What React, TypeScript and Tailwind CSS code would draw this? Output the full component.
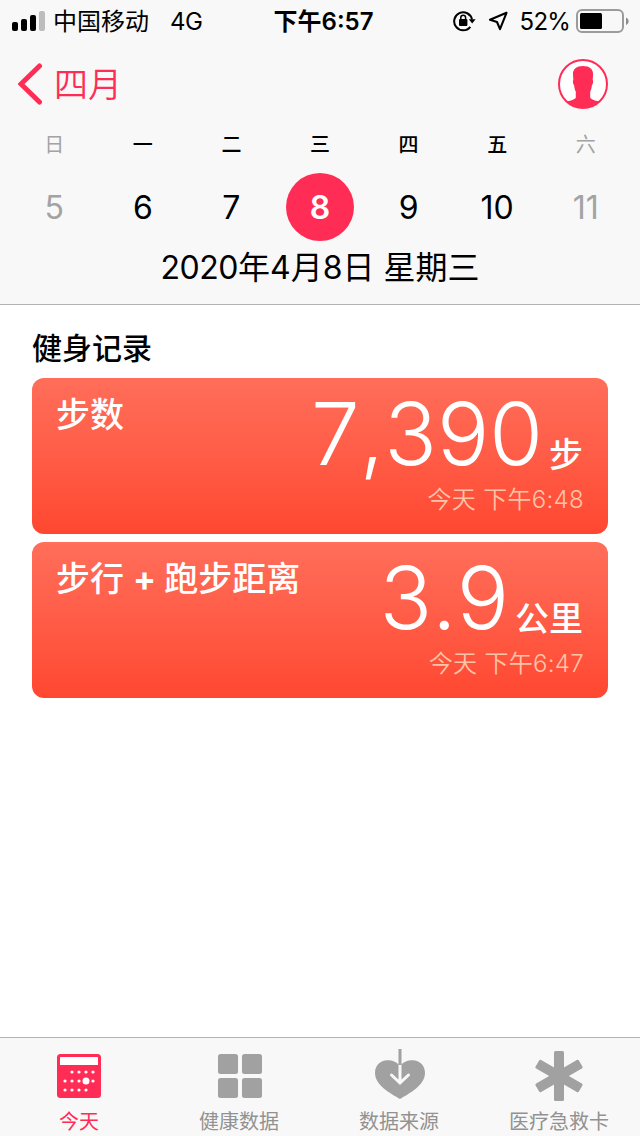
import type { ReactNode } from 'react';

const days = [
  { name: '日', date: 5, weekend: true },
  { name: '一', date: 6 },
  { name: '二', date: 7 },
  { name: '三', date: 8, selected: true },
  { name: '四', date: 9 },
  { name: '五', date: 10 },
  { name: '六', date: 11, weekend: true },
];

function StatusBar() {
  return (
    <div className="h-10 grid grid-cols-[1fr_auto_1fr] items-center text-2xl leading-10 text-black">
      <div className="flex items-center pl-3">
        <svg width="33" height="20" viewBox="0 0 33 20">
          <rect x="0" y="11" width="6" height="9" rx="2" />
          <rect x="9" y="8" width="6" height="12" rx="2" />
          <rect x="18" y="4" width="6" height="16" rx="2" />
          <rect x="27" y="0" width="6" height="20" rx="2" fill="#bdbdbd" />
        </svg>
        <span className="ml-2 pt-0.5">中国移动</span>
        <span className="ml-[21px] pt-0.5 tracking-[-0.5px]">4G</span>
      </div>
      <div className="font-semibold pl-[7px] pt-px">下午6:57</div>
      <div className="flex items-center justify-end pr-2.5">
        {/* Rotation lock */}
        <svg width="23" height="22" viewBox="0 0 23 22">
          <path d="M17.3 16.8A9 9 0 1 1 19 9.500" fill="none" stroke="#000" strokeWidth="2" />
          <path d="M15.8 9.2h6.8L19.2 13.5z" />
          <rect x="6" y="9" width="8.4" height="7" rx="1" />
          <path d="M7.8 9.5V7.6a2.4 2.4 0 0 1 4.8 0v1.9" fill="none" stroke="#000" strokeWidth="1.5" />
        </svg>
        {/* Location arrow */}
        <svg className="ml-3" width="20" height="20" viewBox="0 0 20 20">
          <path d="M18.500 1.800 2 8.800 9 11 12 18.200z" fill="none" stroke="#000" strokeWidth="2.1" strokeLinejoin="round" />
        </svg>
        <span className="ml-3 pt-0.5 tracking-[-0.8px]">52%</span>
        <svg className="ml-1.5" width="54" height="24" viewBox="0 0 54 24">
          <rect x="1" y="1" width="46" height="22" rx="5" fill="none" stroke="#9b9b9b" strokeWidth="2" />
          <rect x="4" y="4" width="22" height="16" rx="1.5" />
          <path d="M50 8.5c3.5 1.5 3.5 6 0 7.5z" fill="#8e8e8e" />
        </svg>
      </div>
    </div>
  );
}

function NavBar() {
  return (
    <div className="h-[88px] flex items-center justify-between pl-[18px] pr-8 text-[#ff2d55]">
      <div className="flex items-center">
        <svg width="25" height="42" viewBox="0 0 25 42">
          <path d="M21.5 3 3 21l18.5 18" fill="none" stroke="currentColor" strokeWidth="5" strokeLinecap="round" />
        </svg>
        <span className="ml-[11px] pt-0.5 text-[34px] leading-none font-[350]">四月</span>
      </div>
      <svg width="50" height="50" viewBox="0 0 50 50" fill="currentColor">
        <circle cx="25" cy="25" r="24" fill="#fff" stroke="currentColor" strokeWidth="2" />
        <path d="M25 7c-7 0-10.5 3.5-10 9l.3 5c-.8.6-.4 4.300.8 5.300.4 3.500.9 5 1.700 6.500v5.700c-.8 2-4 2.800-8.800 4A24 24 0 0 0 41 42.500c-4.800-1.200-8-2-8.800-4v-5.700c.8-1.500 1.300-3 1.700-6.500 1.200-1 1.600-4.700.8-5.300l.3-5c.5-5.500-3-9-10-9z" />
      </svg>
    </div>
  );
}

function Week() {
  return (
    <div className="grid grid-cols-7 px-[10px]">
      {days.map((day) => (
        <div key={day.date} className={`flex flex-col items-center ${day.weekend ? 'text-[#a3a3a3]' : 'text-black'}`}>
          <span className={`h-8 text-xl leading-[34px] ${day.weekend ? '' : 'font-medium'}`}>{day.name}</span>
          <span
            className={`mt-[13px] size-[68px] rounded-full text-center text-[32px] leading-[69px] ${
              day.selected ? 'bg-[#ff2d55] text-white font-semibold' : ''
            }`}
          >
            {day.date}
          </span>
        </div>
      ))}
    </div>
  );
}

type CardProps = { title: ReactNode; value: string; unit: string; time: string };

function Card({ title, value, unit, time }: CardProps) {
  return (
    <div className="h-[156px] flex justify-between rounded-xl bg-linear-to-b from-[#ff6e5a] to-[#ff4730] px-6 text-white">
      <div className="pt-4 text-[34px] leading-[41px] font-medium whitespace-nowrap">{title}</div>
      <div className="flex flex-col items-end">
        <div className="h-[108px] flex items-baseline leading-[112px] whitespace-nowrap">
          <span className="text-[87px] font-light [font-kerning:none]">{value}</span>
          <span className="ml-1.5 mr-px translate-y-0.5 text-[34px] font-medium">{unit}</span>
        </div>
        <div className="text-2xl leading-7 font-[350] tracking-[0.3px] text-[#ffc4a8]">{time}</div>
      </div>
    </div>
  );
}

function CalendarIcon() {
  const dots = [
    [15, 18], [22, 18], [29, 18], [36, 18],
    [8, 27], [15, 27], [22, 27], [36, 27],
    [8, 36], [15, 36], [22, 36], [29, 36],
  ];
  return (
    <svg width="50" height="52" viewBox="-3 -4 50 52">
      <rect width="44" height="44" rx="3.5" fill="currentColor" />
      <rect x="3" y="3" width="38" height="8" rx="0.5" fill="#fff" />
      {dots.map(([x, y]) => (
        <circle key={`${x}-${y}`} cx={x} cy={y} r="1.6" fill="#fff" />
      ))}
      <circle cx="29" cy="27" r="3.5" fill="#fff" />
    </svg>
  );
}

function GridIcon() {
  return (
    <svg width="50" height="52" viewBox="-4 -4 50 52" fill="#a1a1a1">
      <rect width="20" height="20" rx="2.5" />
      <rect x="24" width="20" height="20" rx="2.5" />
      <rect y="24" width="20" height="20" rx="2.5" />
      <rect x="24" y="24" width="20" height="20" rx="2.5" />
    </svg>
  );
}

function HeartIcon() {
  return (
    <svg className="overflow-visible" width="50" height="52" viewBox="-1 0 50 52">
      <path d="M25 49C16 43.5 0 35.5 0 23 0 14 7 10.3 12 10.3c6 0 10 2 13 5.5 3-3.5 7-5.5 13-5.5 5 0 12 3.7 12 12.7C50 35.5 34 43.5 25 49z" fill="#a1a1a1" />
      <path d="M25 15v18M16.5 25 25 33l8.5-8" fill="none" stroke="#f8f8f8" strokeWidth="3" strokeLinecap="round" />
      <path d="M25-1v16" stroke="#a1a1a1" strokeWidth="3" />
    </svg>
  );
}

function AsteriskIcon() {
  return (
    <svg width="50" height="52" viewBox="0 0 50 52" fill="#a1a1a1">
      <rect x="20" y="1" width="10" height="50" rx="1.5" />
      <rect x="20" y="1" width="10" height="50" rx="1.5" transform="rotate(60 25 26)" />
      <rect x="20" y="1" width="10" height="50" rx="1.5" transform="rotate(-60 25 26)" />
    </svg>
  );
}

function Tab({ icon, label, active }: { icon: ReactNode; label: string; active?: boolean }) {
  return (
    <div className={`w-40 flex flex-col items-center pt-3 pr-0.5 ${active ? 'text-[#ff2d55]' : 'text-[#929292]'}`}>
      {icon}
      <span className="mt-[7px] text-xl leading-[27px]">{label}</span>
    </div>
  );
}

export default function App() {
  return (
    <div className="w-[640px] h-[1136px] flex flex-col overflow-hidden bg-white font-[Inter,'Noto_Sans_CJK_SC',sans-serif]">
      <header className="h-[305px] shrink-0 border-b border-[#b2b2b2] bg-[#f8f8f8]">
        <StatusBar />
        <NavBar />
        <Week />
        <div className="mt-[5px] text-center text-[32px] leading-[44px] text-black">
          <span className="tracking-[-0.5px]">2020</span>年4月8日 星期三
        </div>
      </header>

      <main className="flex-1 px-8">
        <h1 className="pt-[23px] pb-2.5 text-[30px] leading-10 font-medium text-black">健身记录</h1>
        <div className="flex flex-col gap-2">
          <Card title="步数" value="7,390" unit="步" time="今天 下午6:48" />
          <Card
            title={<>步行 <span className="font-bold tracking-[-1px]">+</span> 跑步距离</>}
            value="3.9"
            unit="公里"
            time="今天 下午6:47"
          />
        </div>
      </main>

      <nav className="h-[99px] shrink-0 flex border-t border-[#b2b2b2] bg-[#f8f8f8]">
        <Tab icon={<CalendarIcon />} label="今天" active />
        <Tab icon={<GridIcon />} label="健康数据" />
        <Tab icon={<HeartIcon />} label="数据来源" />
        <Tab icon={<AsteriskIcon />} label="医疗急救卡" />
      </nav>
    </div>
  );
}
